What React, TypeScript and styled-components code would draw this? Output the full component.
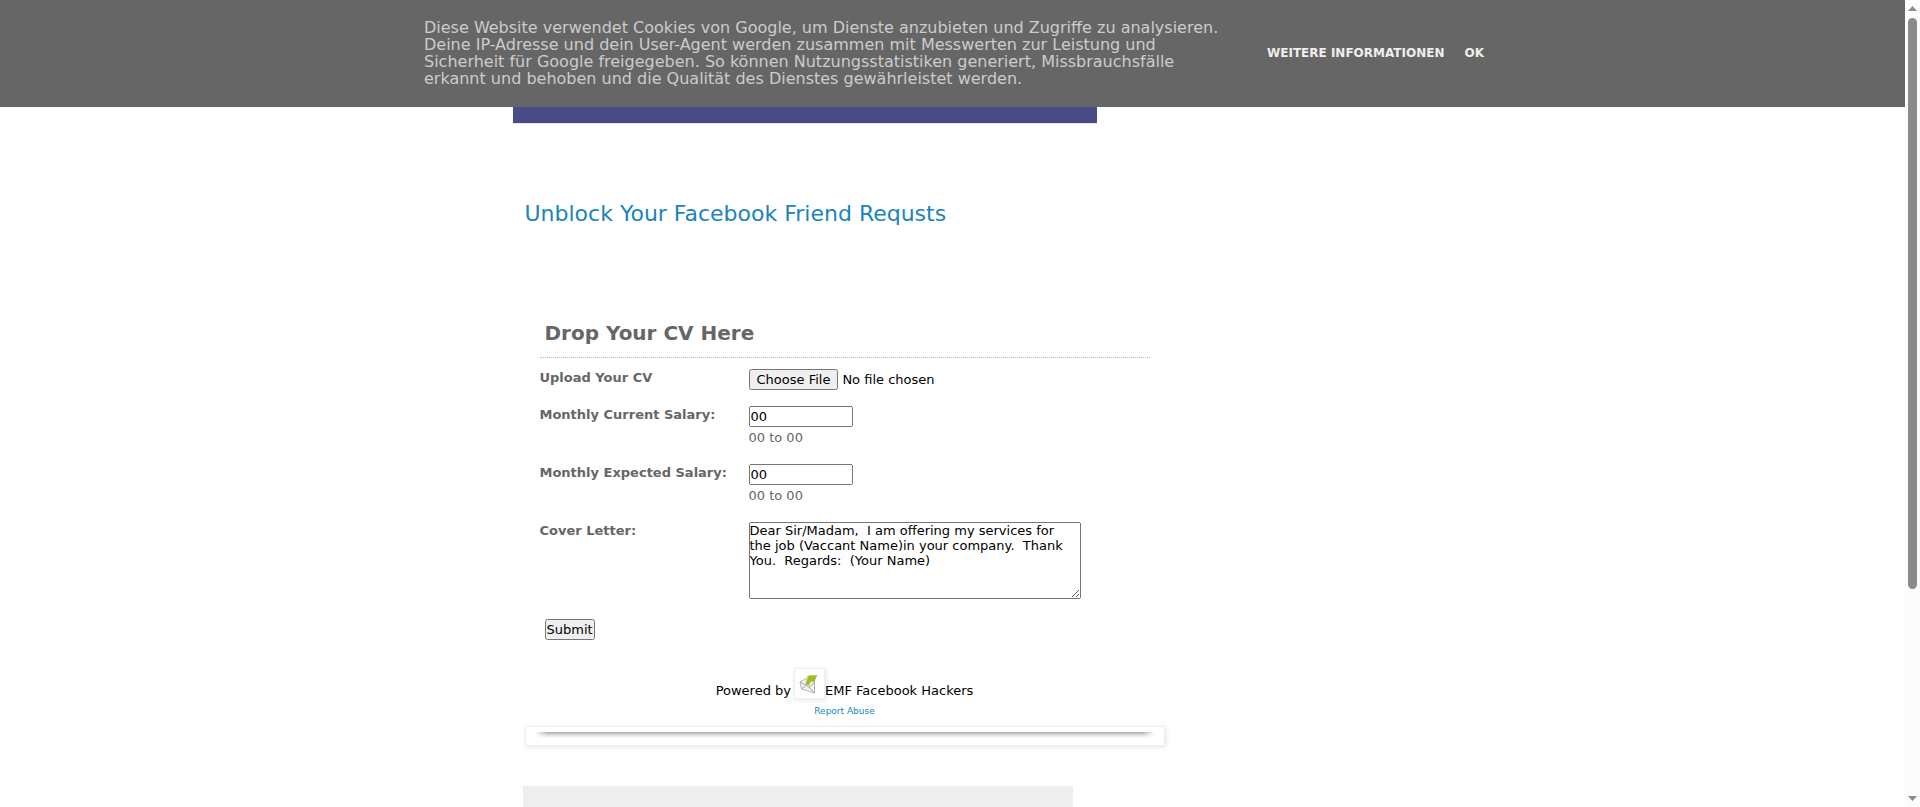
import React from "react";
import styled, { createGlobalStyle } from "styled-components";

const GlobalStyle = createGlobalStyle`
  *, *::before, *::after { box-sizing: border-box; }
  body {
    margin: 0;
    background: #fff;
    color: #000;
    font-family: "DejaVu Sans", Verdana, sans-serif;
    font-size: 13px;
    line-height: 15px;
  }
  a { color: #1a84bc; text-decoration: none; }
`;

const Viewport = styled.div`
  display: flex;
  height: 100vh;
  overflow: hidden;
`;

const Page = styled.div`
  flex: 1;
  min-width: 0;
  overflow: hidden;
`;

const ScrollTrack = styled.div`
  display: flex;
  flex-direction: column;
  align-items: center;
  width: 15px;
  padding: 6px 0;
  gap: 7px;
  background: #fcfcfc;
`;

const ScrollArrow = styled.svg`
  display: block;
  flex: none;
  width: 9px;
  height: 5px;
  fill: #8b8b8b;
`;

const ScrollRail = styled.div`
  flex: 1;
  width: 9px;
`;

const ScrollThumb = styled.div`
  height: 74%;
  border-radius: 5px;
  background: #8b8b8b;
`;

const CookieBar = styled.div`
  display: flex;
  justify-content: center;
  gap: 40px;
  padding: 19px 16px 20px 19px;
  background: #666;
  color: #ccc;
`;

const CookieText = styled.p`
  flex: 0 1 803px;
  margin: 0;
  font-size: 16px;
  line-height: 17px;
`;

const CookieActions = styled.div`
  display: flex;
  align-items: center;
  flex: none;
  gap: 20px;
  font-size: 12px;
  font-weight: bold;
  text-transform: uppercase;
`;

const CookieLink = styled.a`
  color: #eee;
`;

const CookieButton = styled.button`
  padding: 0;
  border: 0;
  background: none;
  color: #eee;
  font: inherit;
  text-transform: inherit;
  cursor: pointer;
`;

const Content = styled.main`
  max-width: 896px;
  margin: 0 auto;
`;

const HeaderImage = styled.div`
  max-width: 584px;
  height: 17px;
  margin-left: 8px;
  border-bottom: 1px solid #e6e6f2;
  background: linear-gradient(#494c88 75%, #4b4b79);
`;

const Post = styled.article`
  max-width: 640px;
  margin-left: 20px;
`;

const PostTitle = styled.h1`
  margin: 0;
  padding-top: 77px;
  font-size: 22px;
  font-weight: normal;
  line-height: 26px;
`;

const Form = styled.form`
  padding: 92px 15px 0;
`;

const FormTitle = styled.h2`
  margin: 0 0 11px;
  padding: 2px 5px 12px;
  border-bottom: 1px dotted #bbb;
  color: #666;
  font-size: 20px;
  line-height: 24px;
`;

const Row = styled.div<{ $height: number }>`
  display: flex;
  min-height: ${({ $height }) => $height}px;
`;

const Label = styled.label`
  flex: 0 0 209px;
  padding-top: 1px;
  color: #666;
  font-weight: bold;
`;

const Field = styled.div`
  display: flex;
  flex: 1;
  flex-direction: column;
  align-items: flex-start;
  gap: 3px;
`;

const FileInput = styled.input`
  height: 21px;
  font: inherit;

  &::file-selector-button {
    font: inherit;
  }
`;

const TextInput = styled.input`
  width: 104px;
  height: 21px;
  padding: 0;
  font: inherit;
`;

const LetterInput = styled.textarea`
  display: block;
  width: 332px;
  height: 77px;
  max-width: 100%;
  padding: 0;
  font: inherit;
`;

const Hint = styled.span`
  color: #666;
`;

const SubmitButton = styled.button`
  display: block;
  height: 21px;
  margin-left: 5px;
  padding: 0;
  font: inherit;
`;

const Credits = styled.div`
  display: flex;
  flex-direction: column;
  align-items: center;
  padding-top: 28px;
`;

const PoweredBy = styled.div`
  display: flex;
  align-items: flex-end;
`;

const PoweredText = styled.span`
  padding: 0 3px 1px 0;
`;

const PoweredName = styled(PoweredText)`
  padding-right: 0;
`;

const LogoFrame = styled.span`
  display: flex;
  padding: 4px;
  border: 1px solid #eee;
  background: #fff;
  box-shadow: 1px 1px 5px rgba(0, 0, 0, 0.1);
`;

const ReportLink = styled.a`
  margin-top: 7px;
  font-size: 9px;
  line-height: 11px;
`;

const ShadowFrame = styled.div`
  height: 20px;
  margin-top: 9px;
  padding: 5px 9px;
  border: 1px solid #eee;
  background: #fff;
  box-shadow: 1px 1px 5px rgba(0, 0, 0, 0.1);
`;

const ShadowLine = styled.div`
  height: 6px;
  background: linear-gradient(90deg, #fff, transparent 2%, transparent 98%, #fff),
    linear-gradient(#aaa, #ddd 50%, #fff);
`;

const CommentPanel = styled.section`
  max-width: 550px;
  height: 220px;
  margin: 40px 0 0 18px;
  background: #eee;
`;

const MailLogo = () => (
  <svg width="21" height="21" viewBox="0 0 21 21" role="img" aria-label="EmailMeForm">
    <path d="M1 9 L8 5 L15.5 9.5 L15.5 20 L2.5 16 Z" fill="#f2f2f2" stroke="#b4b4b4" strokeLinejoin="round" />
    <path d="M1 9 L10 14 L15.5 9.5 M2.5 16 L7 12.5 M15.5 20 L10 14" fill="none" stroke="#a6a6a6" />
    <path d="M6.5 11.5 C7 8 8 6 9.5 4.5 L7.5 3.5 C11 2 14 2 18.5 2.5 C17 4.5 16 7 15.5 9.5 L13.5 8 C12 8.5 10.5 10 10 12.5 Z" fill="#9fbe22" />
  </svg>
);

const salaryFields = [
  { id: "current-salary", label: "Monthly Current Salary:" },
  { id: "expected-salary", label: "Monthly Expected Salary:" },
];

const letter =
  "Dear Sir/Madam,  I am offering my services for the job (Vaccant Name)in your company.  Thank You.  Regards:  (Your Name)";

export default function App() {
  return (
    <Viewport>
      <GlobalStyle />
      <Page>
        <CookieBar>
          <CookieText>
            Diese Website verwendet Cookies von Google, um Dienste anzubieten und Zugriffe zu analysieren. Deine
            IP-Adresse und dein User-Agent werden zusammen mit Messwerten zur Leistung und Sicherheit für Google
            freigegeben. So können Nutzungsstatistiken generiert, Missbrauchsfälle erkannt und behoben und die
            Qualität des Dienstes gewährleistet werden.
          </CookieText>
          <CookieActions>
            <CookieLink href="#cookies">Weitere Informationen</CookieLink>
            <CookieButton type="button">Ok</CookieButton>
          </CookieActions>
        </CookieBar>
        <Content>
          <HeaderImage />
          <Post>
            <PostTitle>
              <a href="#post">Unblock Your Facebook Friend Requsts</a>
            </PostTitle>
            <Form onSubmit={(event) => event.preventDefault()}>
              <FormTitle>Drop Your CV Here</FormTitle>
              <Row $height={37}>
                <Label htmlFor="cv">Upload Your CV</Label>
                <Field>
                  <FileInput id="cv" type="file" />
                </Field>
              </Row>
              {salaryFields.map(({ id, label }) => (
                <Row key={id} $height={58}>
                  <Label htmlFor={id}>{label}</Label>
                  <Field>
                    <TextInput id={id} type="text" defaultValue="00" />
                    <Hint>00 to 00</Hint>
                  </Field>
                </Row>
              ))}
              <Row $height={97}>
                <Label htmlFor="letter">Cover Letter:</Label>
                <Field>
                  <LetterInput id="letter" defaultValue={letter} />
                </Field>
              </Row>
              <SubmitButton type="submit">Submit</SubmitButton>
              <Credits>
                <PoweredBy>
                  <PoweredText>Powered by</PoweredText>
                  <LogoFrame>
                    <MailLogo />
                  </LogoFrame>
                  <PoweredName>EMF Facebook Hackers</PoweredName>
                </PoweredBy>
                <ReportLink href="#report">Report Abuse</ReportLink>
              </Credits>
            </Form>
            <ShadowFrame>
              <ShadowLine />
            </ShadowFrame>
          </Post>
          <CommentPanel />
        </Content>
      </Page>
      <ScrollTrack aria-hidden="true">
        <ScrollArrow viewBox="0 0 9 5">
          <path d="M0 5 L4.5 0 L9 5 Z" />
        </ScrollArrow>
        <ScrollRail>
          <ScrollThumb />
        </ScrollRail>
        <ScrollArrow viewBox="0 0 9 5">
          <path d="M0 0 L9 0 L4.5 5 Z" />
        </ScrollArrow>
      </ScrollTrack>
    </Viewport>
  );
}
